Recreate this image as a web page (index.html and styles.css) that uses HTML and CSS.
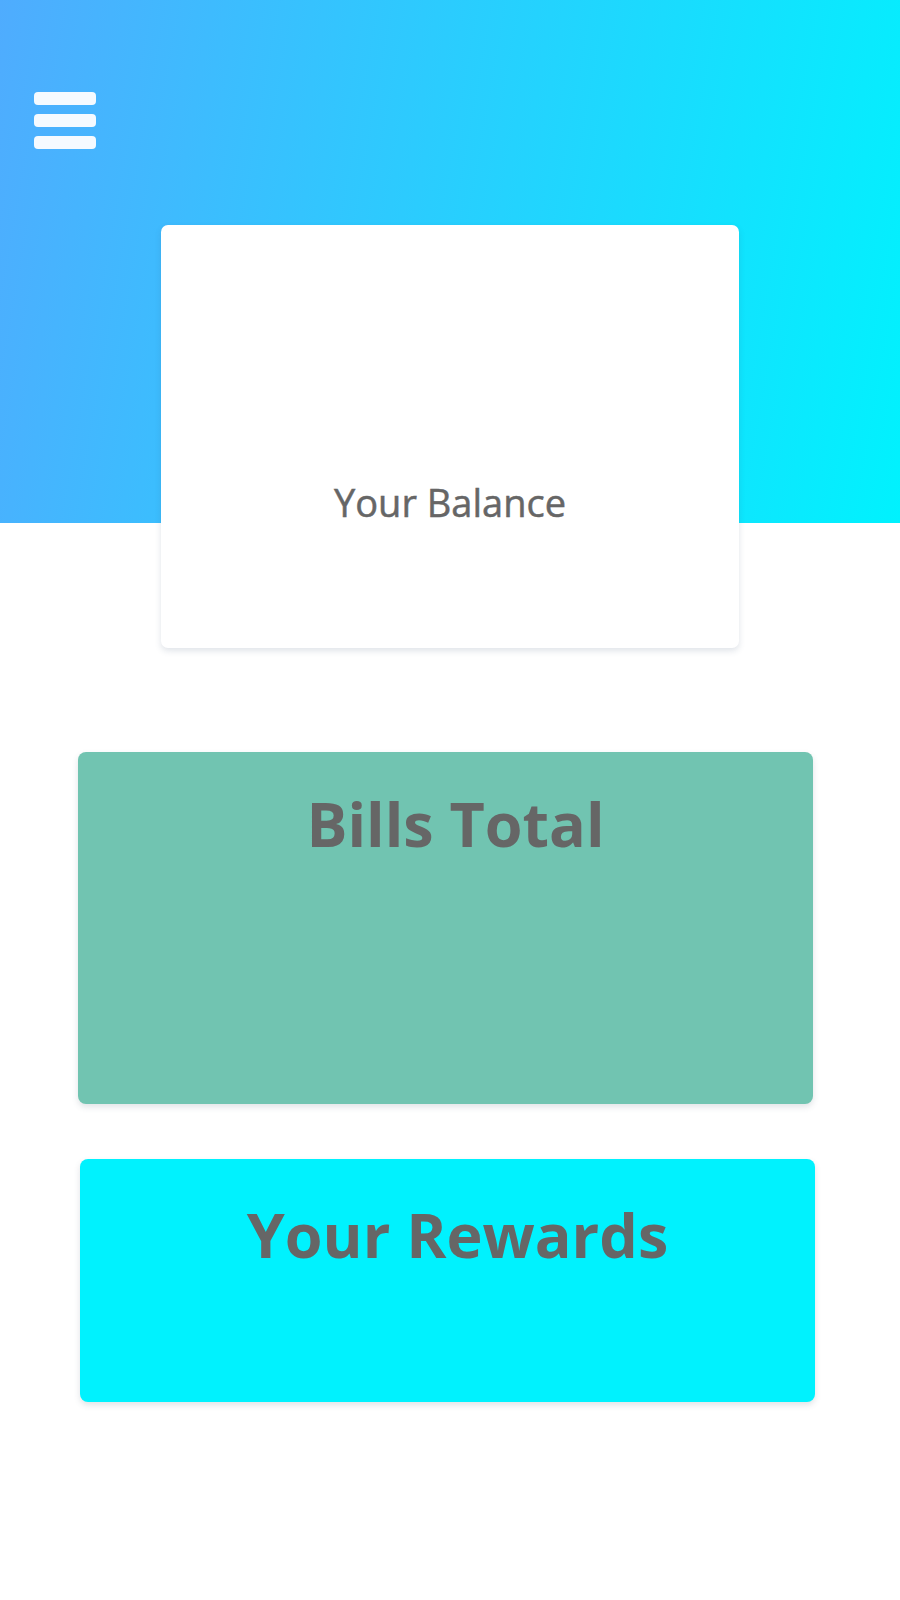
FILE: index.html
```html
<!DOCTYPE html>
<html lang="en">
<head>
<meta charset="utf-8">
<title>Wallet</title>
<link rel="stylesheet" href="styles.css">
</head>
<body>
<div class="page">
  <header class="hero">
    <button class="menu" aria-label="Menu">
      <span class="menu-bar"></span>
      <span class="menu-bar"></span>
      <span class="menu-bar"></span>
    </button>
    <section class="balance-card">
      <p class="balance-label">Your Balance</p>
    </section>
  </header>
  <main class="cards">
    <section class="card card-bills">
      <h2 class="card-title">Bills Total</h2>
    </section>
    <section class="card card-rewards">
      <h2 class="card-title">Your Rewards</h2>
    </section>
  </main>
</div>
</body>
</html>
```

FILE: styles.css
```css
html, body {
  margin: 0;
  padding: 0;
  background: #ffffff;
}

body {
  font-family: "Open Sans", "Noto Sans", "Liberation Sans", sans-serif;
  color: #666666;
}

.page {
  width: 900px;
  min-height: 1600px;
}

.hero {
  padding-top: 92px;
  background: linear-gradient(100deg, #4facfe 0%, #00f2fe 100%) top left / 100% 523px no-repeat;
}

.menu {
  display: flex;
  flex-direction: column;
  gap: 9px;
  margin: 0 0 0 34px;
  padding: 0;
  width: 62px;
  border: 0;
  background: none;
}

.menu-bar {
  display: block;
  height: 13px;
  width: 62px;
  border-radius: 4px;
  background: #f5faff;
}

.balance-card {
  box-sizing: border-box;
  width: 578px;
  height: 423px;
  margin: 76px 0 0 161px;
  padding-top: 252px;
  background: #ffffff;
  border-radius: 7px;
  box-shadow: 0 3px 6px rgba(60, 90, 120, 0.16);
}

.balance-label {
  margin: 0;
  font-size: 38px;
  line-height: 50px;
  font-weight: 400;
  -webkit-text-stroke: 0.5px #666666;
  text-align: center;
  color: #666666;
}

.cards {
  display: flex;
  flex-direction: column;
  padding-top: 104px;
}

.card {
  box-sizing: border-box;
  width: 735px;
  border-radius: 8px;
  box-shadow: 0 3px 6px rgba(60, 80, 100, 0.16);
  padding-left: 20px;
}

.card-title {
  margin: 0;
  font-size: 61px;
  line-height: 82px;
  font-weight: 700;
  text-align: center;
  color: #666666;
}

.card-bills {
  margin-left: 78px;
  height: 352px;
  padding-top: 31px;
  background: #71c4b1;
}

.card-rewards {
  margin-left: 80px;
  margin-top: 55px;
  height: 243px;
  padding-top: 35px;
  background: #00f2fe;
}
```
